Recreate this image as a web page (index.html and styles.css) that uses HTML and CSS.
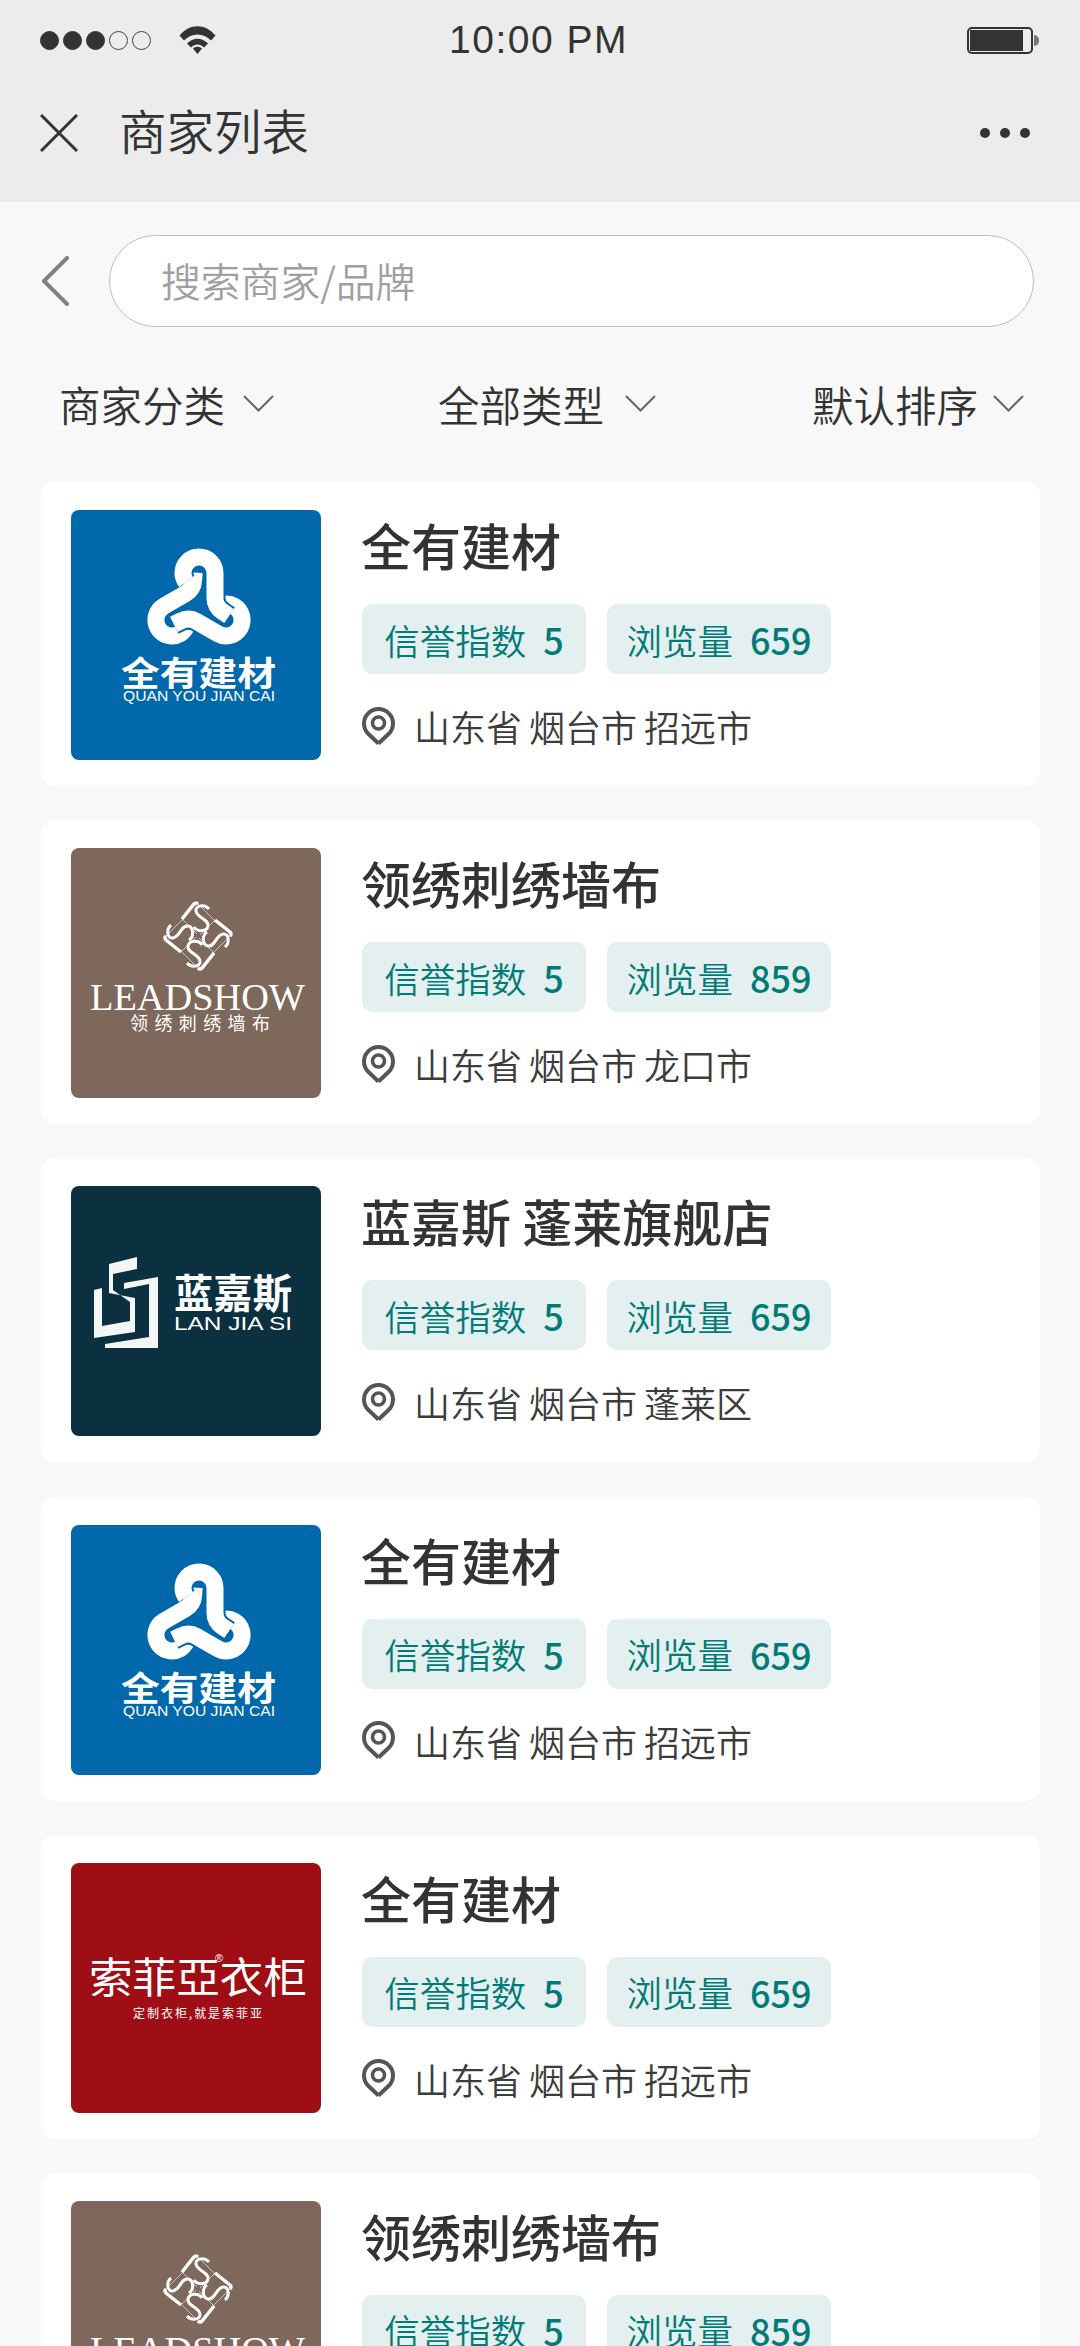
FILE: index.html
```html
<!DOCTYPE html>
<html lang="zh-CN">
<head>
<meta charset="utf-8">
<title>商家列表</title>
<link rel="stylesheet" href="styles.css">
</head>
<body>
<svg class="defs" width="0" height="0" aria-hidden="true">
  <defs>
    <path id="link" d="M115 72Q112 68 112 63A16 16 0 0 1 144 63V88Q144 97 152 102L158 106"/>
    <symbol id="logo-quan" viewBox="0 0 250 250">
      <rect width="250" height="250" fill="#0068ab"/>
      <g fill="none" stroke-linecap="butt">
        <g stroke="#0068ab" stroke-width="21"><use href="#link" transform="rotate(240 128 94.3)"/></g>
        <g stroke="#fff" stroke-width="17"><use href="#link" transform="rotate(240 128 94.3)"/></g>
        <g stroke="#0068ab" stroke-width="21"><use href="#link" transform="rotate(120 128 94.3)"/></g>
        <g stroke="#fff" stroke-width="17"><use href="#link" transform="rotate(120 128 94.3)"/></g>
        <g stroke="#0068ab" stroke-width="21"><use href="#link"/></g>
        <g stroke="#fff" stroke-width="17"><use href="#link"/></g>
      </g>
      <text class="lt lt-b" x="50" y="176" font-size="34" textLength="155" lengthAdjust="spacingAndGlyphs">全有建材</text>
      <text class="lt lt-l" x="52" y="191" font-size="14" textLength="152" lengthAdjust="spacingAndGlyphs">QUAN YOU JIAN CAI</text>
    </symbol>
    <symbol id="logo-lead" viewBox="0 0 250 250">
      <rect width="250" height="250" fill="#7d685b"/>
      <g transform="translate(127 88)" fill="none" stroke="#fff">
        <g id="lead-q">
          <path d="M-16 -17L-4 -32Q-2 -34 0 -32" stroke-width="3.400"/>
          <path d="M0 -32L19 -13M-16 -17L-1 -2" stroke-width=".8" opacity=".75"/>
          <path d="M11 -27C7 -32 -3 -31 -2 -25C-1 -18 11 -17 10 -10C9 -4 -1 -4 -4 -9" stroke-width="3"/>
        </g>
        <use href="#lead-q" transform="rotate(90)"/>
        <use href="#lead-q" transform="rotate(180)"/>
        <use href="#lead-q" transform="rotate(270)"/>
      </g>
      <text class="lt lt-s" x="19" y="162" font-size="37" textLength="215" lengthAdjust="spacingAndGlyphs">LEADSHOW</text>
      <text class="lt lt-c" x="59" y="182" font-size="18" textLength="140">领绣刺绣墙布</text>
    </symbol>
    <symbol id="logo-lan" viewBox="0 0 250 250">
      <rect width="250" height="250" fill="#0b3040"/>
      <polygon fill="#f4f6f6" points="38,78 66,71 66,83 42,88 42,104 59,116 59,135 31,140 31,102 23,104 23,152 64,146 64,112 38,107"/>
      <polygon fill="#f4f6f6" points="53,97 87,91 87,162 34,162 34,158 78,151 78,98 53,103"/>
      <text class="lt lt-b" x="103" y="122" font-size="40" textLength="118" lengthAdjust="spacingAndGlyphs">蓝嘉斯</text>
      <text class="lt lt-l" x="103" y="144" font-size="19" textLength="118" lengthAdjust="spacingAndGlyphs">LAN JIA SI</text>
    </symbol>
    <symbol id="logo-sofia" viewBox="0 0 250 250">
      <rect width="250" height="250" fill="#9f0e15"/>
      <text class="lt lt-c" x="18" y="130" font-size="42" textLength="218" lengthAdjust="spacingAndGlyphs">索菲亞衣柜</text>
      <text class="lt lt-l" x="144" y="99" font-size="11">®</text>
      <text class="lt lt-c" x="62" y="155" font-size="12" textLength="129">定制衣柜,就是索菲亚</text>
    </symbol>
    <symbol id="pin" viewBox="0 0 33 39">
      <path d="M16.5 36.5L6.5 27A14.5 14.5 0 1 1 26.5 27L16.5 36.5" fill="none" stroke="#555" stroke-width="4"/>
      <circle cx="16.5" cy="16" r="6" fill="none" stroke="#555" stroke-width="3.6"/>
    </symbol>
    <symbol id="chev" viewBox="0 0 31 17">
      <path d="M1 1L15.5 15.5L30 1" fill="none" stroke="#666" stroke-width="2"/>
    </symbol>
  </defs>
</svg>

<header class="top">
  <div class="status">
    <div class="status-left">
      <div class="signal"><i class="dot on"></i><i class="dot on"></i><i class="dot on"></i><i class="dot"></i><i class="dot"></i></div>
      <svg class="wifi" viewBox="0 0 36 28"><path d="M0 9.500C10 -3 26 -3 36 9.500L31.500 14.500C24 6.500 12 6.500 4.500 14.500ZM7.500 17.500C13.500 11 22.500 11 28.500 17.500L24.500 21.500C20.500 17.500 15.500 17.500 11.500 21.500ZM13.500 22.500C16 20 20 20 22.500 22.500L18 28Z" fill="#333"/></svg>
    </div>
    <div class="time">10:00 PM</div>
    <div class="battery"><div class="battery-body"><div class="battery-fill"></div></div><div class="battery-nub"></div></div>
  </div>
  <div class="nav">
    <svg class="close" viewBox="0 0 38 38"><path d="M1 1L37 37M37 1L1 37" fill="none" stroke="#333" stroke-width="3"/></svg>
    <div class="nav-title">商家列表</div>
    <div class="more"><i></i><i></i><i></i></div>
  </div>
</header>

<section class="search-row">
  <svg class="back" viewBox="0 0 28 50"><path d="M26 2L3 25L26 48" fill="none" stroke="#808080" stroke-width="4" stroke-linecap="round" stroke-linejoin="round"/></svg>
  <div class="search">搜索商家/品牌</div>
</section>

<section class="filters">
  <div class="filter">商家分类<svg class="chev"><use href="#chev"/></svg></div>
  <div class="filter filter-mid">全部类型<svg class="chev"><use href="#chev"/></svg></div>
  <div class="filter filter-end">默认排序<svg class="chev"><use href="#chev"/></svg></div>
</section>

<main class="list">
  <article class="card">
    <svg class="logo"><use href="#logo-quan"/></svg>
    <div class="info">
      <h2 class="name">全有建材</h2>
      <div class="tags"><span class="tag">信誉指数<b>5</b></span><span class="tag">浏览量<b>659</b></span></div>
      <div class="loc"><svg class="pin"><use href="#pin"/></svg>山东省 烟台市 招远市</div>
    </div>
  </article>
  <article class="card">
    <svg class="logo"><use href="#logo-lead"/></svg>
    <div class="info">
      <h2 class="name">领绣刺绣墙布</h2>
      <div class="tags"><span class="tag">信誉指数<b>5</b></span><span class="tag">浏览量<b>859</b></span></div>
      <div class="loc"><svg class="pin"><use href="#pin"/></svg>山东省 烟台市 龙口市</div>
    </div>
  </article>
  <article class="card">
    <svg class="logo"><use href="#logo-lan"/></svg>
    <div class="info">
      <h2 class="name">蓝嘉斯 蓬莱旗舰店</h2>
      <div class="tags"><span class="tag">信誉指数<b>5</b></span><span class="tag">浏览量<b>659</b></span></div>
      <div class="loc"><svg class="pin"><use href="#pin"/></svg>山东省 烟台市 蓬莱区</div>
    </div>
  </article>
  <article class="card">
    <svg class="logo"><use href="#logo-quan"/></svg>
    <div class="info">
      <h2 class="name">全有建材</h2>
      <div class="tags"><span class="tag">信誉指数<b>5</b></span><span class="tag">浏览量<b>659</b></span></div>
      <div class="loc"><svg class="pin"><use href="#pin"/></svg>山东省 烟台市 招远市</div>
    </div>
  </article>
  <article class="card">
    <svg class="logo"><use href="#logo-sofia"/></svg>
    <div class="info">
      <h2 class="name">全有建材</h2>
      <div class="tags"><span class="tag">信誉指数<b>5</b></span><span class="tag">浏览量<b>659</b></span></div>
      <div class="loc"><svg class="pin"><use href="#pin"/></svg>山东省 烟台市 招远市</div>
    </div>
  </article>
  <article class="card">
    <svg class="logo"><use href="#logo-lead"/></svg>
    <div class="info">
      <h2 class="name">领绣刺绣墙布</h2>
      <div class="tags"><span class="tag">信誉指数<b>5</b></span><span class="tag">浏览量<b>859</b></span></div>
      <div class="loc"><svg class="pin"><use href="#pin"/></svg>山东省 烟台市 龙口市</div>
    </div>
  </article>
</main>
</body>
</html>
```

FILE: styles.css
```css
* { box-sizing: border-box; }
html, body { margin: 0; padding: 0; }
body {
  width: 1080px;
  height: 2346px;
  overflow: hidden;
  background: #f8f8f8;
  color: #333;
  font-family: "Noto Sans CJK SC", "Liberation Sans", sans-serif;
}
.defs { display: block; width: 0; height: 0; }

.top { height: 202px; background: #ececec; }
.status {
  height: 80px;
  display: flex;
  align-items: center;
  padding: 0 41px 0 40px;
}
.status-left { display: flex; align-items: center; width: 409px; flex: none; }
.signal { display: flex; gap: 4px; }
.dot {
  display: block;
  width: 19px;
  height: 19px;
  border-radius: 50%;
  border: 1px solid #444;
}
.dot.on { background: #333; border-color: #333; }
.wifi { width: 37px; height: 28px; margin-left: 28px; flex: none; }
.time {
  font-family: "Liberation Sans", sans-serif;
  font-size: 39px;
  letter-spacing: 1.5px;
  color: #333;
  line-height: 80px;
}
.battery { display: flex; align-items: center; gap: 1px; margin-left: auto; }
.battery-body {
  width: 66px;
  height: 27px;
  border: 2px solid #333;
  border-radius: 5px;
  padding: 1px 8px 1px 1px;
}
.battery-fill { width: 100%; height: 100%; background: #333; }
.battery-nub {
  width: 5px;
  height: 11px;
  background: #777;
  border-radius: 0 5px 5px 0;
}

.nav {
  height: 106px;
  display: flex;
  align-items: center;
  padding: 0 50px 0 40px;
}
.close { width: 38px; height: 38px; }
.nav-title {
  margin-left: 41px;
  font-size: 47.5px;
  font-weight: 350;
  line-height: 60px;
  color: #333;
  flex: 1;
  position: relative;
  top: -3px;
}
.more { display: flex; gap: 10px; }
.more i { display: block; width: 10px; height: 10px; border-radius: 50%; background: #333; }

.search-row {
  display: flex;
  align-items: center;
  padding: 33px 46px 0 41px;
}
.back { width: 28px; height: 50px; flex: none; }
.search {
  margin-left: 40px;
  flex: 1;
  height: 92px;
  background: #fff;
  border: 1px solid #bdbdbd;
  border-radius: 46px;
  padding-left: 51px;
  font-size: 39.8px;
  font-weight: 350;
  line-height: 88px;
  color: #a0a0a0;
}

.filters {
  display: flex;
  justify-content: space-between;
  padding: 47px 56px 0 59px;
}
.filter {
  display: flex;
  align-items: center;
  font-size: 41.5px;
  font-weight: 350;
  line-height: 60px;
  color: #333;
}
.chev { width: 31px; height: 17px; margin-left: 18px; margin-top: -2px; }
.filter-mid { margin-left: 8px; }
.filter-mid .chev { margin-left: 21px; }
.filter-end .chev { margin-left: 15px; }

.list { padding: 48px 40px 0 41px; }
.card {
  display: flex;
  height: 304px;
  margin-bottom: 34.2px;
  padding: 28px 30px;
  background: #fff;
  border-radius: 14px;
}
.logo { width: 250px; height: 250px; border-radius: 8px; flex: none; }
.info { margin-left: 40px; min-width: 0; }
.name {
  margin: 0;
  font-size: 50px;
  font-weight: 500;
  line-height: 68px;
  color: #333;
}
.tags { display: flex; gap: 21px; margin-top: 26px; margin-left: 1px; }
.tag {
  width: 224px;
  height: 70px;
  display: flex;
  align-items: center;
  justify-content: center;
  background: #e4f0f0;
  border-radius: 10px;
  font-size: 35.5px;
  font-weight: 350;
  color: #027a77;
}
.tag b { margin-left: 17px; font-size: 36px; font-weight: 500; }
.loc {
  display: flex;
  align-items: center;
  margin-top: 27px;
  margin-left: 1px;
  font-size: 36px;
  font-weight: 350;
  word-spacing: -1px;
  line-height: 50px;
  color: #3c3c3c;
}
.pin { width: 33px; height: 39px; margin-right: 19px; flex: none; }

.lt { fill: #fff; }
.lt-b { font-family: "Noto Sans CJK SC", sans-serif; font-weight: 700; }
.lt-l { font-family: "Liberation Sans", sans-serif; }
.lt-s { font-family: "Liberation Serif", serif; }
.lt-c { font-family: "Noto Sans CJK SC", sans-serif; }
```
